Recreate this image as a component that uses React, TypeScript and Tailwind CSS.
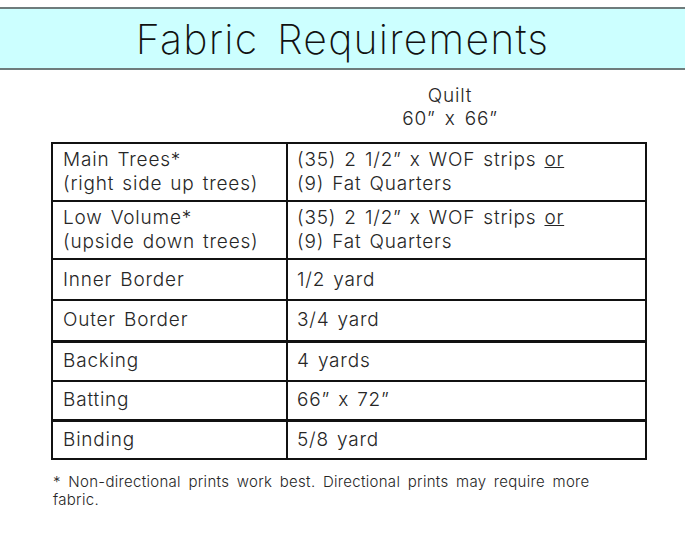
const rows: { label: string[]; value: React.ReactNode[]; h: string; thick?: boolean }[] = [
  {
    label: ["Main Trees*", "(right side up trees)"],
    value: [
      <>
        (35) 2 1/2” x WOF strips <span className="underline">or</span>
      </>,
      "(9) Fat Quarters",
    ],
    h: "h-[58px]",
  },
  {
    label: ["Low Volume*", "(upside down trees)"],
    value: [
      <>
        (35) 2 1/2” x WOF strips <span className="underline">or</span>
      </>,
      "(9) Fat Quarters",
    ],
    h: "h-[58px]",
  },
  { label: ["Inner Border"], value: ["1/2 yard"], h: "h-[41px]" },
  { label: ["Outer Border"], value: ["3/4 yard"], h: "h-[41px]", thick: true },
  { label: ["Backing"], value: ["4 yards"], h: "h-[40px]" },
  { label: ["Batting"], value: ["66” x 72”"], h: "h-[39px]", thick: true },
  { label: ["Binding"], value: ["5/8 yard"], h: "h-[39px]" },
];

export default function App() {
  return (
    <div className="h-[537px] w-[685px] overflow-hidden bg-white font-['Inter',sans-serif] font-light text-[#262626]">
      <div className="mt-[7px] flex h-[63px] items-center justify-center border-y-2 border-[#6e7c7c] bg-[#ccffff]">
        <h1 className="pt-[1px] text-[41px] font-extralight leading-none tracking-[1.2px] [word-spacing:6px] text-[#111]">
          Fabric Requirements
        </h1>
      </div>

      <div className="ml-[398px] mt-[14px] w-[104px] text-center text-[19px] leading-[23px] tracking-[0.8px] [word-spacing:3px]">
        <div>Quilt</div>
        <div>60” x 66”</div>
      </div>

      <table className="ml-[51px] mt-[12px] w-[596px] border-collapse text-[19px] leading-[24px] tracking-[0.8px] [word-spacing:2px]">
        <tbody>
          {rows.map((r, i) => (
            <tr
              key={i}
              className={`${r.h} border-x-2 border-[#111] ${i === 0 ? "border-t-2" : ""} ${
                r.thick ? "border-b-[3px]" : "border-b-2"
              }`}
            >
              <td className="w-[235px] border-r-2 border-[#111] px-[10px] align-middle">
                {r.label.map((l, j) => (
                  <div key={j}>{l}</div>
                ))}
              </td>
              <td className="px-[9px] align-middle">
                {r.value.map((v, j) => (
                  <div key={j}>{v}</div>
                ))}
              </td>
            </tr>
          ))}
        </tbody>
      </table>

      <p className="ml-[53px] mt-[13px] w-[545px] text-[15px] leading-[18px] tracking-[0.3px] [word-spacing:3px]">
        * Non-directional prints work best. Directional prints may require more fabric.
      </p>
    </div>
  );
}
